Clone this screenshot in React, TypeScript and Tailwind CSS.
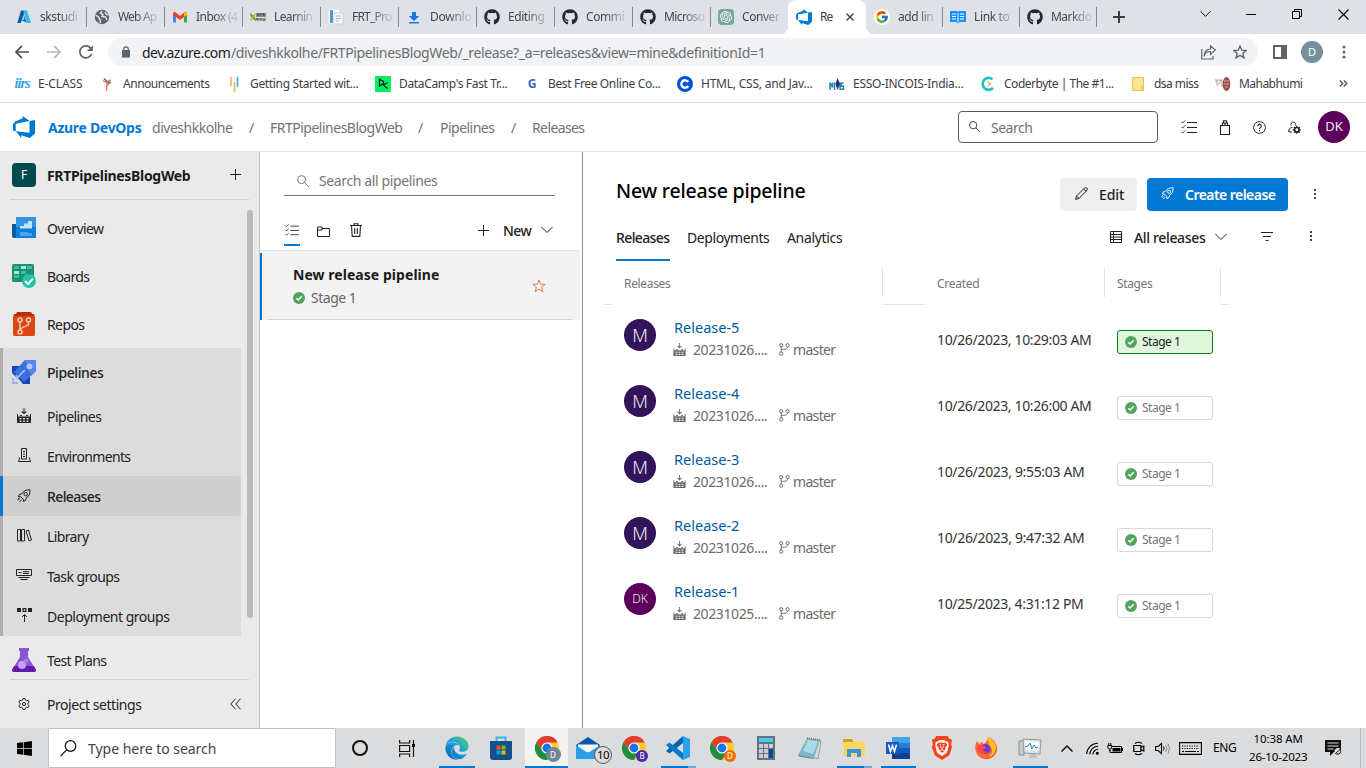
import React, { useLayoutEffect, useRef, useState } from "react";
import { FaGithub, FaWindows, FaEdge } from "react-icons/fa";
import { FcGoogle } from "react-icons/fc";
import { SiOpenai, SiBrave } from "react-icons/si";

type P = { className?: string; children?: React.ReactNode };

/* One line of text, tracked so that it fills the width given by its class. */
function T({ className = "", children }: P) {
  const outer = useRef<HTMLSpanElement>(null);
  const inner = useRef<HTMLSpanElement>(null);
  const [spacing, setSpacing] = useState(0);
  useLayoutEffect(() => {
    if (!outer.current || !inner.current) return;
    const count = (inner.current.textContent || " ").length;
    const natural = inner.current.getBoundingClientRect().width;
    setSpacing((outer.current.clientWidth - 0.6 - natural) / count);
  }, []);
  return (
    <span ref={outer} className={`block shrink-0 whitespace-nowrap ${className}`}>
      <span ref={inner} className="inline-block" style={{ letterSpacing: spacing }}>
        {children}
      </span>
    </span>
  );
}

function Svg({ className = "", box = "0 0 16 16", children }: P & { box?: string }) {
  return (
    <svg viewBox={box} className={`shrink-0 ${className}`} fill="none" stroke="currentColor" strokeWidth="1">
      {children}
    </svg>
  );
}

/* ---------- shared glyphs ---------- */
const DevOps = ({ className = "" }: P) => (
  <svg viewBox="0 0 24 24" className={`shrink-0 ${className}`} fill="#0078d4">
    <path d="M0 8.877L2.247 5.91l8.405-3.416V.022l7.37 5.393L2.966 8.338v8.225L0 15.707zm24-4.45v14.651l-5.753 4.9-9.303-3.057v3.056l-5.978-7.416 15.057 1.798V5.415z" />
  </svg>
);
const Plus = ({ className = "" }: P) => (
  <Svg className={className} box="0 0 11 11"><path d="M5.500 0V11M0 5.500H11" /></Svg>
);
const Chevron = ({ className = "" }: P) => (
  <Svg className={className} box="0 0 12 8"><path d="M.5 1L6 6.500 11.500 1" /></Svg>
);
const Search = ({ className = "" }: P) => (
  <Svg className={className} box="0 0 12 12"><circle cx="4.600" cy="4.600" r="4" /><path d="M7.500 7.500L11.700 11.700" /></Svg>
);
const Checklist = ({ className = "" }: P) => (
  <Svg className={className} box="0 0 16 14">
    <path d="M6 2.500H16M6 7.500H16M6 12.500H16" />
    <path d="M.3 1.800L1.600 3.100 4.200.4M.3 6.800L1.600 8.100 4.200 5.400M.3 11.800L1.600 13.100 4.200 10.400" strokeWidth=".9" />
  </Svg>
);
const Kebab = ({ className = "" }: P) => (
  <svg viewBox="0 0 4 12" className={`shrink-0 ${className}`} fill="#4c4640">
    <path d="M1 1h2v2H1zM1 5h2v2H1zM1 9h2v2H1z" />
  </svg>
);
const Rocket = ({ className = "" }: P) => (
  <Svg className={className} box="0 0 14 14">
    <path d="M13 .8C9 .6 6.500 2 4.600 5L2.500 5.300 1.500 7.600 3.700 7.700 6.200 10.200 6.400 12.400 8.600 11.400 9 9.200C12 7.300 13.300 4.800 13 .8Z" />
    <circle cx="8.700" cy="5.200" r="1.700" />
    <path d="M3.200 9.200L1 11.400M4.700 10.700L2.500 12.900M2.300 8.500L.6 10.200" />
  </Svg>
);
const Build = ({ className = "" }: P) => (
  <svg viewBox="0 0 14 15" className={`shrink-0 ${className}`} fill="currentColor">
    <path d="M6.500 0h1v4.300L9 3l.7.700L7 6.300 4.300 3.700 5 3l1.500 1.300zM0 6h1v2.500h12V6h1v9H0zM3 7h2v1H3zM9 7h2v1H9z" />
    <path d="M2.500 10h2v1.300h-2zM6 10h2v1.300H6zM9.500 10h2v1.300h-2zM2.500 12.500h2v1.300h-2zM6 12.500h2v1.300H6zM9.500 12.500h2v1.300h-2z" fill="#f4f4f4" />
  </svg>
);
const Ok = ({ className = "" }: P) => (
  <svg viewBox="0 0 12 12" className={`shrink-0 ${className}`} fill="none">
    <circle cx="6" cy="6" r="6" fill="#55a362" />
    <path d="M3.300 6.200L5.200 8 8.700 4.300" stroke="#fff" strokeWidth="1.500" />
  </svg>
);
const Branch = ({ className = "" }: P) => (
  <Svg className={className} box="0 0 11 13">
    <circle cx="2.200" cy="2.200" r="1.600" /><circle cx="8.600" cy="2.200" r="1.600" /><circle cx="2.200" cy="10.600" r="1.600" />
    <path d="M2.200 3.800V9M8.600 3.800C8.600 6.200 6 6.300 2.200 6.500" />
  </Svg>
);

/* ---------- browser ---------- */
const github = <FaGithub className="size-4 text-[#24292f]" />;
const tabs: { icon: React.ReactNode; label: string; w: string }[] = [
  {
    icon: (
      <svg viewBox="0 0 16 16" className="size-4">
        <path d="M5 1.500h4L4.800 14H1.300z" fill="#0a5ba5" /><path d="M7 1.500h4L15 14h-3.600z" fill="#35b5ee" /><path d="M7.500 5L11 14 4 10.500h4z" fill="#0078d4" />
      </svg>
    ),
    label: "skstudi",
    w: "w-[38px]",
  },
  {
    icon: (
      <svg viewBox="0 0 16 16" className="size-4">
        <circle cx="8" cy="8" r="7.200" fill="#5f6368" />
        <path d="M1.500 6L4.500 8 6 10.500 6.500 14M8 2L6.500 4 9 5.500 8 7.500 11.500 8 13 11M11 3l1 2 2.500 1" stroke="#dee1e6" strokeWidth="1.500" fill="none" />
      </svg>
    ),
    label: "Web Ap",
    w: "w-[39px]",
  },
  {
    icon: (
      <svg viewBox="0 0 16 16" className="size-4">
        <path d="M1 4v9.500h3V7z" fill="#4285f4" /><path d="M15 4v9.500h-3V7z" fill="#34a853" />
        <path d="M1 4.300L2.500 2.500 8 6.700 13.500 2.500 15 4.300V6L8 11 1 6z" fill="#ea4335" /><path d="M12 3.700l1.500-1.200L15 4.300V6l-3 2z" fill="#fbbc04" />
      </svg>
    ),
    label: "Inbox (4",
    w: "w-[42px]",
  },
  {
    icon: (
      <svg viewBox="0 0 16 16" className="size-4">
        <path d="M6 4h10v4H6z" fill="#8a8a84" /><path d="M5 9h11v3H5z" fill="#a5a49f" /><path d="M7 5h1v2m1-2h2v1m1-1h2v2M6 10h3m1 0h2m1 1h2" stroke="#444" fill="none" />
        <path d="M0 4l3 2 3-2-1 4 1 4-3-2-3 2 1-4z" fill="#d9b72c" /><path d="M0 4l3 3-2 1zM4 8l2 4-3-2z" fill="#1f9d66" />
      </svg>
    ),
    label: "Learnin",
    w: "w-[39px]",
  },
  {
    icon: (
      <svg viewBox="0 0 16 16" className="size-4">
        <path d="M0 0h12v16H0z" fill="#f6f8fa" stroke="#c3cad2" strokeWidth=".6" /><path d="M2 1h3v13H2z" fill="#4a9cd3" />
        <path d="M6 4h9v11H6z" fill="#f4f6f8" stroke="#b8c2cc" strokeWidth=".6" /><path d="M8 7h5M8 9.500h5M8 12h3" stroke="#aeb9c4" />
      </svg>
    ),
    label: "FRT_Pro",
    w: "w-[40px]",
  },
  {
    icon: (
      <svg viewBox="0 0 16 16" className="size-4" fill="#1a73e8">
        <path d="M6 3h4v4h3.300L8 12 2.700 7H6zM3 13h10v1.600H3z" />
      </svg>
    ),
    label: "Downlo",
    w: "w-[42px]",
  },
  { icon: github, label: "Editing", w: "w-[37px]" },
  { icon: github, label: "Commi", w: "w-[39px]" },
  { icon: github, label: "Microso", w: "w-[41px]" },
  { icon: <span className="flex size-4 items-center justify-center rounded-sm bg-[#74aa9c]"><SiOpenai className="size-3 text-white" /></span>, label: "Conver", w: "w-[38px]" },
];
const tabsAfter: { icon: React.ReactNode; label: string; w: string }[] = [
  { icon: <span className="flex size-4 items-center justify-center rounded-full bg-white"><FcGoogle className="size-3.5" /></span>, label: "add lin", w: "w-[36px]" },
  {
    icon: (
      <svg viewBox="0 0 16 14" className="h-3.5 w-4">
        <path d="M0 1h7l1 1 1-1h7v11H9.500L8 13.500 6.500 12H0z" fill="#1a8cff" /><path d="M2 4h4M2 6.500h4M2 9h4M10 4h4M10 6.500h4M10 9h4M8 3v9" stroke="#fff" />
      </svg>
    ),
    label: "Link to",
    w: "w-[36px]",
  },
  { icon: github, label: "Markdo", w: "w-[41px]" },
];

function Tab({ icon, label, w, width, line = true }: { icon: React.ReactNode; label: string; w: string; width: string; line?: boolean }) {
  return (
    <div className={`relative flex h-full items-center pl-2 ${width}`}>
      {icon}
      <span className="ml-2 [mask-image:linear-gradient(90deg,#000_18px,#0003_38px)]">
        <T className={`text-[12px] text-[#43474b] ${w}`}>{label}</T>
      </span>
      {line && <span className="absolute top-[7px] -right-px h-5 w-px bg-[#86898d]" />}
    </div>
  );
}

function TabStrip() {
  return (
    <div className="flex h-[34px] bg-[#dee1e6] pl-2">
      {tabs.map((t, i) => (
        <Tab key={i} icon={t.icon} label={t.label} w={t.w} width="w-[78px]" line={i < 9} />
      ))}
      <div className="relative flex h-full w-[78px] items-center rounded-t-lg bg-white pl-2">
        <span className="absolute bottom-0 -left-2 size-2 bg-[radial-gradient(circle_at_0_0,transparent_8px,#fff_8.500px)]" />
        <span className="absolute -right-2 bottom-0 size-2 bg-[radial-gradient(circle_at_100%_0,transparent_8px,#fff_8.500px)]" />
        <DevOps className="size-4" />
        <T className="ml-2 w-[13px] text-[12px] text-[#3c4043]">Re</T>
        <svg viewBox="0 0 8 8" className="mr-3 ml-auto size-2" stroke="#3c4043" strokeWidth="1.400"><path d="M.5.5l7 7M7.500.5l-7 7" /></svg>
      </div>
      {tabsAfter.map((t, i) => (
        <Tab key={i} icon={t.icon} label={t.label} w={t.w} width={i === 0 ? "w-[76px]" : "w-[77px]"} />
      ))}
      <svg viewBox="0 0 12 12" className="mt-[11px] ml-[17px] size-3" stroke="#3c4043" strokeWidth="2"><path d="M6 0v12M0 6h12" /></svg>
      <Chevron className="mt-2.5 ml-auto h-2 w-[11px] text-black" />
      <span className="mt-3.5 ml-[35px] h-px w-2.5 bg-black" />
      <svg viewBox="0 0 10 10" className="mt-[9px] ml-9 size-2.5" fill="none" stroke="#000"><path d="M.5 2.500h7v7h-7zM2.500 2.500v-2h7v7h-2" /></svg>
      <svg viewBox="0 0 11 11" className="mt-[9px] mr-[17px] ml-[36px] size-[11px]" stroke="#000" strokeWidth="1.100"><path d="M.5.5l10 10M10.500.5l-10 10" /></svg>
    </div>
  );
}

function Toolbar() {
  return (
    <div className="flex h-9 items-center bg-white pl-[15px] text-[#5f6368]">
      <Svg className="size-3.5 text-[#4d5156]" box="0 0 14 14"><path d="M14 7H1M7 .8L.9 7 7 13.200" strokeWidth="1.700" /></Svg>
      <Svg className="ml-[18px] size-3.5 text-[#b4b7ba]" box="0 0 14 14"><path d="M0 7H13M7 .8L13.100 7 7 13.200" strokeWidth="1.700" /></Svg>
      <Svg className="ml-[18px] size-3.5" box="0 0 14 14"><path d="M12.500 9A6 6 0 1 1 11.500 3L13 4.700" strokeWidth="1.700" /><path d="M13.900.2V6H8z" fill="currentColor" stroke="none" /></Svg>
      <div className="ml-[15px] flex h-7 w-[1150px] items-center rounded-full bg-[#f1f3f4] pl-[14px]">
        <svg viewBox="0 0 8 12" className="h-3 w-2" fill="none"><path d="M0 4h8v7.500H0z" fill="#5f6368" /><path d="M1.800 4.500V3a2.200 2.200 0 0 1 4.400 0v1.500" stroke="#5f6368" strokeWidth="1.200" /></svg>
        <T className="ml-3 w-[89px] text-[14px] text-[#202124]">dev.azure.com</T>
        <T className="w-[535px] text-[14px] text-[#6a6e73]">/diveshkkolhe/FRTPipelinesBlogWeb/_release?_a=releases&view=mine&definitionId=1</T>
        <Svg className="ml-auto size-[15px]" box="0 0 15 15"><path d="M.7 4V14H12V11M3 11.500C3.500 8 6 6.500 9.500 6.500V9.500L14.500 5 9.500 1V4C5.500 4 3 7.500 3 11.500Z" strokeWidth="1.200" /></Svg>
        <Svg className="mr-[11px] ml-[17px] size-3.5" box="0 0 14 14"><path d="M7 1L8.700 5.200 13.200 5.500 9.800 8.400 10.900 12.800 7 10.400 3.100 12.800 4.200 8.400.8 5.500 5.300 5.200Z" strokeWidth="1.400" /></Svg>
      </div>
      <svg viewBox="0 0 14 14" className="ml-[15px] size-3.5" fill="none"><path d="M1 1h12v12H1z" stroke="#5f6368" strokeWidth="2" /><path d="M8 1h5v12H8z" fill="#5f6368" /></svg>
      <span className="ml-3.5 flex size-[22px] items-center justify-center rounded-full bg-[#78909c] text-[11px] text-white">D</span>
      <svg viewBox="0 0 4 14" className="ml-[19px] h-3.5 w-1" fill="#5f6368"><circle cx="2" cy="2" r="1.500" /><circle cx="2" cy="7" r="1.500" /><circle cx="2" cy="12" r="1.500" /></svg>
    </div>
  );
}

function Bookmark({ icon, label, width }: { icon: React.ReactNode; label: string; width: string }) {
  return (
    <div className="flex items-center gap-2">
      <span className="flex size-4 items-center justify-center">{icon}</span>
      <T className={`text-[12px] text-[#3c4043] ${width}`}>{label}</T>
    </div>
  );
}

function Bookmarks() {
  return (
    <div className="flex h-[33px] items-center gap-4 border-b border-[#d5d7da] bg-white pb-[5px] pl-3.5">
      <Bookmark width="w-[45px]" label="E-CLASS" icon={<span className="font-['Liberation_Serif',serif] text-[14px] leading-none font-bold tracking-[-0.9px] text-[#2ba5df] italic">iirs</span>} />
      <Bookmark width="w-[87px]" label="Announcements" icon={<svg viewBox="0 0 16 16" className="size-4" fill="none" strokeWidth="1.500"><path d="M4 5l4 1-.5 9M8 6l4-2M8 6l2 3" stroke="#ee7a4b" /><path d="M5 2.500l3 3M12 7L8.500 6" stroke="#3d6fa5" /></svg>} />
      <Bookmark width="w-[109px]" label="Getting Started wit..." icon={<svg viewBox="0 0 16 16" className="size-4" strokeWidth="1.700"><path d="M5 1v9M8.500 6v10" stroke="#f0b567" /><path d="M11.500 1v10" stroke="#3fb4d8" /></svg>} />
      <Bookmark width="w-[109px]" label="DataCamp's Fast Tr..." icon={<svg viewBox="0 0 16 16" className="size-4" fill="none"><path d="M0 0h16v16H0z" fill="#03ef62" /><path d="M4.500 11V3l4 2.500v2L4.500 10M12.500 6.500L8.500 9l4 3.500" stroke="#05192d" strokeWidth="1.200" /></svg>} />
      <Bookmark width="w-[113px]" label="Best Free Online Co..." icon={<span className="text-[12px] font-bold text-[#356ac4]">G</span>} />
      <Bookmark width="w-[112px]" label="HTML, CSS, and Jav..." icon={<svg viewBox="0 0 16 16" className="size-4" fill="none"><circle cx="8" cy="8" r="8" fill="#0056d2" /><path d="M11.200 10A3.700 3.700 0 1 1 11.200 6" stroke="#fff" strokeWidth="2.400" /></svg>} />
      <Bookmark width="w-[111px]" label="ESSO-INCOIS-India..." icon={<svg viewBox="0 0 16 16" className="size-4" fill="none"><path d="M1 14V6.500l2.500 5V6.500M5.500 6.500V14M11 6.500V14M14.500 7.200h-2.300v3h2.300v3.100h-3" stroke="#2485ad" strokeWidth="1.500" /><path d="M8.500 2L11 8 8.500 14 6.500 8z" fill="#2b2c78" /></svg>} />
      <Bookmark width="w-[110px]" label="Coderbyte | The #1..." icon={<svg viewBox="0 0 16 16" className="size-4" fill="none"><path d="M12.500 3.200A6 6 0 1 0 13 12" stroke="#1cc0c4" strokeWidth="2.600" /><path d="M7.500 5.500L10.500 8l-3 2.500" stroke="#f1a44b" strokeWidth="1.200" /></svg>} />
      <Bookmark width="w-[45px]" label="dsa miss" icon={<svg viewBox="0 0 16 16" className="size-4"><path d="M2.500 1.500h11v13h-11z" fill="#ffe591" stroke="#e8c34a" /><path d="M11.500 10.500h2v4h-2z" fill="#ffd75e" stroke="#e8c34a" strokeWidth=".7" /></svg>} />
      <Bookmark width="w-[64px]" label="Mahabhumi" icon={<svg viewBox="0 0 16 16" className="size-4" fill="none"><path d="M0 4h7M2 4v6M5 4v3l-2 1M7 4v7M.5 6h1" stroke="#9a8a88" strokeWidth=".8" /><ellipse cx="11.500" cy="8" rx="3.800" ry="7" fill="#9c4a44" /><path d="M9 5h5M9 8h5M10 11h3" stroke="#e6c9bd" strokeWidth=".8" /></svg>} />
      <svg viewBox="0 0 9 7" className="ml-[20px] h-[7px] w-[9px]" fill="none" stroke="#4d5156" strokeWidth="1.300"><path d="M.8.5l3 3-3 3M4.800.5l3 3-3 3" /></svg>
    </div>
  );
}

/* ---------- Azure DevOps ---------- */
function Header() {
  return (
    <div className="flex h-[49px] items-center border-b border-[#e3e3e3] bg-white pl-[13px] text-[14px] text-[#737373]">
      <DevOps className="size-[22px]" />
      <T className="ml-[13px] w-[94px] font-bold text-[#0078d4]">Azure DevOps</T>
      <T className="ml-2.5 w-[81px]">diveshkkolhe</T>
      <span className="ml-4 w-[6px]">/</span>
      <T className="ml-[15px] w-[133px]">FRTPipelinesBlogWeb</T>
      <span className="ml-[15px] w-[6px]">/</span>
      <T className="ml-4 w-[55px]">Pipelines</T>
      <span className="ml-4 w-[6px]">/</span>
      <T className="ml-[15px] w-[53px]">Releases</T>
      <div className="mb-px ml-auto flex h-8 w-[200px] items-center rounded-sm border border-[#5a5a5a] pl-[10px]">
        <Search className="mb-px size-[11px] text-[#333]" />
        <T className="mt-px ml-[11px] w-[42px]">Search</T>
      </div>
      <Checklist className="ml-[23px] h-3.5 w-4 text-[#222]" />
      <Svg className="ml-[22px] h-[15px] w-[12px] text-[#222]" box="0 0 12 15"><path d="M1.500 5.500h9v9h-9zM3.500 5.500V3h5v2.500M4.500 3V.8h3V3M6 3v2" strokeWidth="1.100" /></Svg>
      <Svg className="ml-[22px] size-[13px] text-[#222]" box="0 0 13 13"><circle cx="6.500" cy="6.500" r="5.900" /><path d="M4.700 5.200a1.800 1.800 0 1 1 2.500 1.600q-.7.300-.7 1.300M6.500 9v1.300" strokeWidth="1.100" /></Svg>
      <Svg className="ml-[22px] size-[13px] text-[#222]" box="0 0 13 13"><path d="M3.200 4.500A2.400 2.400 0 1 1 7.500 4.500M.7 10.500C.7 8 2 6.500 4.500 6.500M1 9.500V11H4" /><circle cx="8.800" cy="8.800" r="2.300" strokeWidth="1.700" /><path d="M8.800 4.800v8M4.800 8.800h8M6 6l5.600 5.600M11.600 6L6 11.600" strokeDasharray="1.400 5.200" strokeWidth="1.300" /></Svg>
      <span className="mr-4 ml-[17px] flex size-8 items-center justify-center rounded-full bg-[#5c005c] text-[13px] text-[#f1e6f1]">DK</span>
    </div>
  );
}

function NavItem({ icon, label, width, strong }: { icon: React.ReactNode; label: string; width: string; strong?: boolean }) {
  return (
    <div className="flex h-12 items-center pl-3">
      {icon}
      <T className={`ml-[11px] text-[14px] text-[#222] ${strong ? "font-medium" : ""} ${width}`}>{label}</T>
    </div>
  );
}

function SubItem({ icon, label, width, active }: { icon: React.ReactNode; label: string; width: string; active?: boolean }) {
  return (
    <div className={`relative flex h-10 items-center pl-3 ${active ? "rounded-sm bg-[#cfcfcf]" : ""}`}>
      {active && <span className="absolute top-0 left-0 h-10 w-[3px] bg-[#0078d4]" />}
      <span className="flex w-6 items-center justify-center text-[#222]">{icon}</span>
      <T className={`ml-[11px] text-[14px] text-[#222] ${active ? "font-medium" : ""} ${width}`}>{label}</T>
    </div>
  );
}

function Sidebar() {
  return (
    <div className="flex w-[260px] shrink-0 flex-col border-r border-[#c8c8c8] bg-[#eaeaea]">
      <div className="mx-2.5 flex h-12 items-center border-b border-[#cfcfcf] pl-0.5">
        <span className="mb-px flex size-6 items-center justify-center rounded-sm bg-[#004b50] text-[12px] text-white">F</span>
        <T className="ml-[11px] w-[144px] text-[14px] font-bold text-[#1b1b1b]">FRTPipelinesBlogWeb</T>
        <Plus className="mr-2 mb-0.5 ml-auto size-[11px] text-[#222]" />
      </div>
      <div className="relative h-[479px] overflow-hidden pt-1 pr-[18px]">
        <NavItem width="w-[57px]" label="Overview" icon={
          <svg viewBox="0 0 24 24" className="size-6"><path d="M0 8h5v14H2a2 2 0 0 1-2-2z" fill="#005ba1" /><path d="M4 1h20v21H2a2 2 0 0 0 2-2z" fill="#0d80da" /><path d="M4 1h20v10H4z" fill="#3494e3" /><path d="M8 10h4V7.500h4V5h4v7.500H8z" fill="#c2e4ff" /><path d="M8 16h8v1h4v3H8z" fill="#47a7ee" /></svg>} />
        <NavItem width="w-[43px]" label="Boards" icon={
          <svg viewBox="0 0 24 24" className="size-6"><path d="M0 1.500Q0 0 1.500 0h19Q22 0 22 1.500V18H1.500Q0 18 0 16.500z" fill="#1f8e74" /><path d="M2 2h5v3H2zM15 2h5v3h-5zM9 7h5v3H9zM2 11h5v3H2z" fill="#33c49e" /><path d="M9 2h5v3H9zM2 7h5v3H2z" fill="#9ff0dc" /><circle cx="17" cy="17" r="7" fill="#20c4a4" /><path d="M13 17l3 3 5-5.500" stroke="#fff" strokeWidth="2" fill="none" /></svg>} />
        <NavItem width="w-[38px]" label="Repos" icon={
          <svg viewBox="0 0 24 24" className="size-6" fill="none"><path d="M5 0h14l1 2h2l1 4H1l1-4h2z" fill="#b52f04" /><path d="M1 4h22v18.500Q23 24 21.500 24h-19Q1 24 1 22.500z" fill="#dd4511" /><g stroke="#fbd3c5" strokeWidth="1.400"><circle cx="8" cy="8" r="2" /><circle cx="16.500" cy="8" r="2" /><circle cx="8" cy="20" r="2" /><path d="M8 10v8M16.500 10v2.500L8 17" /></g></svg>} />
        <div className="relative bg-[#dcdcdc]">
          <span className="absolute inset-y-0 left-0 w-[3px] bg-[#afafaf]" />
          <NavItem strong width="w-[57px]" label="Pipelines" icon={
            <svg viewBox="0 0 24 24" className="size-6"><path d="M0 6h10l-3 12H5l-5-5zM7 18l11-5v11h-7l-5-6z" fill="#1647b5" /><path d="M13 0h11v11L12 22 2 12z" fill="#3a6fe2" /><path d="M13 0h11v11l-5 5z" fill="#5484ee" /><circle cx="17.500" cy="6.500" r="3" fill="#a9c8fb" /><path d="M0 18h2v4h4v2H0z" fill="#93b2f2" /><path d="M4 19l9-9M4 15l2 5" stroke="#a9c4fa" strokeWidth="1.500" /></svg>} />
          <SubItem width="w-[55px]" label="Pipelines" icon={<Build className="mb-0.5 h-[15px] w-3.5" />} />
          <SubItem width="w-[84px]" label="Environments" icon={<Svg className="mb-px h-[15px] w-[13px]" box="0 0 13 15"><path d="M3.500 11V.5h5V11M1.700 9.500L.6 13.500H12.400L11.300 9.500M3.500 11h5M5 3.500h2M5 6h2M5 8.500h2" /></Svg>} />
          <SubItem active width="w-[54px]" label="Releases" icon={<Rocket className="mb-px size-3.5" />} />
          <SubItem width="w-[42px]" label="Library" icon={<Svg className="mb-px h-[13px] w-[15px]" box="0 0 15 13"><path d="M.5.5h3v11.500h-3zM4.500.5h3v11.500h-3zM9 2l2.500-.8L14.500 11l-2.400.9z" /></Svg>} />
          <SubItem width="w-[73px]" label="Task groups" icon={<Svg className="mb-[2px] h-3 w-4" box="0 0 16 12"><path d="M.5.5h15v6H.5zM2.500 3.500h3M7 2.700h6M7 4.500h6M2.500 8.500h11M4.500 10.500h7" /></Svg>} />
          <SubItem width="w-[123px]" label="Deployment groups" icon={<svg viewBox="0 0 15 14" className="mb-[2px] h-3.5 w-[15px]" fill="#222"><path d="M0 0h4v4H0zM11 0h4v4h-4zM5.500 0h4v4h-4zM7 7h1v7H7z" /><path d="M6.700 1.200h1.600v1.600H6.700z" fill="#ddd" /><path d="M5 9l2.500-2.500L10 9" stroke="#222" fill="none" /></svg>} />
        </div>
        <NavItem width="w-[60px]" label="Test Plans" icon={
          <svg viewBox="0 0 24 24" className="size-6"><path d="M7 0h10v3h-1v6l8 13Q24 24 22 24H2Q0 24 0 22L8 9V3H7z" fill="#8b57cf" /><path d="M2 18h20l2 4q0 2-2 2H2q-2 0-2-2z" fill="#5f1bab" /><circle cx="10" cy="17" r="4" fill="#c8a2f2" /><circle cx="14" cy="13" r="2.300" fill="#aa7be0" /></svg>} />
        <span className="absolute top-2.5 right-1.5 h-[408px] w-1.5 rounded-full bg-[#bababa]" />
      </div>
      <div className="mx-2.5 flex h-[49px] items-center border-t border-[#cfcfcf] pl-0.5">
        <Svg className="mb-px ml-[6px] size-3 text-[#222]" box="0 0 12 12"><path d="M5 .6h2l.4 1.500 1.200.7 1.500-.5 1 1.800-1.200 1.100v1.500l1.200 1.200-1 1.700-1.500-.4-1.200.7L7 11.500H5l-.4-1.600-1.200-.7-1.500.4-1-1.700 1.200-1.200V5.200L.9 4.100l1-1.800 1.500.5 1.200-.7z" /><circle cx="6" cy="6" r="1.600" /></Svg>
        <T className="ml-[17px] w-[95px] text-[14px] text-[#222]">Project settings</T>
        <Svg className="mr-2 mb-px ml-auto h-3 w-[11px] text-[#222]" box="0 0 11 12"><path d="M5.500.8L.8 6l4.700 5.200M10.500.8L5.800 6l4.700 5.200" /></Svg>
      </div>
    </div>
  );
}

function PipelineList() {
  return (
    <div className="w-[323px] shrink-0 border-r border-[#8e8e8e] bg-white">
      <div className="mx-6 flex h-11 w-[271px] items-center border-b border-[#767676] pt-3.5 pl-[13px] text-[#767676]">
        <Search className="size-3" />
        <T className="ml-2.5 w-[119px] text-[14px]">Search all pipelines</T>
      </div>
      <div className="flex h-[54px] items-center pt-3.5 pl-6 text-[#222]">
        <span className="relative flex h-8 w-4 items-center justify-center">
          <Checklist className="h-3 w-3.5" />
          <span className="absolute bottom-0 left-0 h-0.5 w-4 bg-[#0078d4]" />
        </span>
        <Svg className="mt-0.5 ml-[17px] h-[11px] w-[13px]" box="0 0 13 11"><path d="M.5 2q0-1 1-1h3l1.500 1.500h5.500q1 0 1 1v6q0 1-1 1h-10q-1 0-1-1zM.5 4h4L6 2.500" strokeWidth="1.100" /></Svg>
        <Svg className="ml-5 h-3.5 w-3" box="0 0 12 14"><path d="M0 2.500h12M4 2.500V.7h4v1.800M1.500 2.500l.7 10.900h7.600l.7-10.900M4.700 5v6M7.300 5v6" strokeWidth="1.100" /></Svg>
        <Plus className="ml-[116px] size-[11px]" />
        <T className="ml-[14px] w-[29px] text-[14px] font-medium">New</T>
        <Chevron className="ml-[9px] h-2 w-3" />
      </div>
      <div className="relative flex h-[70px] w-80 items-center border-t border-[#e4e4e4] bg-[#f3f3f3] pl-[33px]">
        <span className="absolute top-0.5 left-0 h-[67px] w-0.5 bg-[#0078d4]" />
        <span className="absolute bottom-0 left-2 h-px w-[304px] bg-[#d6d6d6]" />
        <div className="w-[239px]">
          <T className="relative top-px w-[147px] text-[14px] leading-6 font-bold text-[#1b1b1b]">New release pipeline</T>
          <div className="flex h-6 items-center"><Ok className="size-3" /><T className="ml-1.5 w-[46px] text-[14px] text-[#666]">Stage 1</T></div>
        </div>
        <Svg className="size-3.5 text-[#d67f4c]" box="0 0 14 14"><path d="M7 1L8.600 5.200 13.200 5.300 9.600 8.200 10.800 12.700 7 10.200 3.200 12.700 4.400 8.200.8 5.300 5.400 5.200Z" /></Svg>
      </div>
    </div>
  );
}

const releases = [
  { n: 5, who: "M", build: "20231026....", date: "10/26/2023, 10:29:03 AM", w: "w-[155px]", on: true },
  { n: 4, who: "M", build: "20231026....", date: "10/26/2023, 10:26:00 AM", w: "w-[155px]" },
  { n: 3, who: "M", build: "20231026....", date: "10/26/2023, 9:55:03 AM", w: "w-[148px]" },
  { n: 2, who: "M", build: "20231026....", date: "10/26/2023, 9:47:32 AM", w: "w-[148px]" },
  { n: 1, who: "DK", build: "20231025....", date: "10/25/2023, 4:31:12 PM", w: "w-[147px]" },
];

function Releases() {
  return (
    <div className="flex-1 bg-white text-[#222]">
      <div className="flex h-[68px] items-center pt-[17px] pl-[33px]">
        <T className="mb-2 w-[190px] text-[19.500px] font-medium text-black">New release pipeline</T>
        <div className="ml-auto flex h-[33px] w-[77px] items-center rounded-sm bg-[#efefef] pl-[15px]">
          <Svg className="mb-0.5 size-[13px]" box="0 0 13 13"><path d="M.6 12.400L1.500 9 9.500 1q1.200-1 2.300 0t.1 2.400L3.900 11.500zM8.500 2L11 4.500M1.500 9L4 11.500" /></Svg>
          <T className="ml-[11px] w-[26px] text-[14px] font-medium">Edit</T>
        </div>
        <div className="ml-2.5 flex h-[33px] w-[141px] items-center rounded-sm bg-[#0078d4] pl-[14px] text-white">
          <Rocket className="mb-0.5 size-[13px]" />
          <T className="ml-[11px] w-[91px] text-[14px] font-semibold">Create release</T>
        </div>
        <Kebab className="mr-[49px] mb-0.5 ml-[25px] h-3 w-1" />
      </div>
      <div className="flex h-[41px] items-center pl-[33px] text-[14px]">
        <span className="relative flex h-full items-center">
          <T className="mb-[7px] w-[54px] font-medium">Releases</T>
          <span className="absolute bottom-0 left-0 h-0.5 w-[54px] bg-[#0078d4]" />
        </span>
        <T className="mb-[7px] ml-[17px] w-[83px]">Deployments</T>
        <T className="mb-[7px] ml-[17px] w-[56px]">Analytics</T>
        <Svg className="mb-[7px] ml-auto size-3" box="0 0 12 12"><path d="M.5.5h11v11H.5zM3.500.5v11M.5 3.500h11M.5 6h11M.5 8.500h11" /></Svg>
        <T className="mb-[7px] ml-3 w-[72px] font-medium">All releases</T>
        <Chevron className="mb-[8px] ml-[9px] h-2 w-3" />
        <Svg className="mb-[8px] ml-[34px] h-[9px] w-3" box="0 0 12 9"><path d="M0 .5h12M2 4.500h8M4.500 8.500h3" /></Svg>
        <Kebab className="mr-[53px] mb-[9px] ml-9 h-3 w-1" />
      </div>
      <div className="relative mt-[7px] flex h-[37px] pl-[41px] text-[12px] text-[#767676]">
        <div className="h-[29px] w-[259px] border-r border-[#e3e3e3] leading-[32px]"><T className="w-[47px]">Releases</T></div>
        <div className="h-[29px] w-[222px] border-r border-[#e3e3e3] pl-[54px] leading-[32px]"><T className="w-[43px]">Created</T></div>
        <div className="h-[29px] w-[116px] border-r border-[#e3e3e3] pl-3 leading-[32px]"><T className="w-[36px]">Stages</T></div>
        <span className="absolute bottom-0 left-[21px] h-px w-2 bg-[#e3e3e3]" />
        <span className="absolute bottom-0 left-[300px] h-px w-[42px] bg-[#e3e3e3]" />
        <span className="absolute bottom-0 left-[638px] h-px w-2 bg-[#e3e3e3]" />
      </div>
      {releases.map((r) => (
        <div key={r.n} className="flex h-[66px] pl-[41px] text-[14px]">
          <span className={`mt-3.5 flex size-8 shrink-0 items-center justify-center rounded-full text-[#efeaf3] ${r.who === "M" ? "bg-[#32145a] text-[18px] font-light" : "bg-[#5c005c] text-[12px] font-light"}`}>{r.who}</span>
          <div className="ml-[17px] w-[264px] pt-2.5">
            <T className="ml-px w-[66px] text-[14.500px] leading-6 text-[#005a9e]">{`Release-${r.n}`}</T>
            <div className="-mt-0.5 flex h-6 items-center text-[#6b6b6b]">
              <Build className="mt-px h-[13px] w-[13px]" />
              <T className="ml-[7px] w-[75px]">{r.build}</T>
              <Branch className="mt-px ml-[11px] h-[13px] w-[11px]" />
              <T className="ml-[3px] w-[43px]">master</T>
            </div>
          </div>
          <div className="w-[180px] pt-[23px] leading-6 text-[#333]"><T className={r.w}>{r.date}</T></div>
          <div className={`mt-[25px] flex h-6 w-24 items-center rounded-[3px] border pl-[7px] text-[12px] ${r.on ? "border-[#107c10] bg-[#dff6dd] text-[#222]" : "border-[#d6d6d6] bg-white text-[#767676]"}`}>
            <Ok className="size-3" />
            <T className="ml-[5px] w-[39px]">Stage 1</T>
          </div>
        </div>
      ))}
    </div>
  );
}

/* ---------- taskbar ---------- */
function Chrome({ badge, color }: { badge: string; color: string }) {
  return (
    <span className="relative block size-6">
      <svg viewBox="0 0 24 24" className="size-6">
        <circle cx="12" cy="12" r="12" fill="#fcc934" />
        <path d="M12 6.500H22.700A12 12 0 0 0 1.600 6L7.200 14.750Z" fill="#e33b2e" />
        <path d="M1.600 6A12 12 0 0 0 12 24L16.760 14.750 7.200 14.750Z" fill="#1e8e3e" />
        <circle cx="12" cy="12" r="5.600" fill="#fff" /><circle cx="12" cy="12" r="4.400" fill="#1a73e8" />
      </svg>
      <span className={`absolute -right-0.5 -bottom-0.5 flex items-center justify-center rounded-full text-[8px] text-white ${color}`}>{badge}</span>
    </span>
  );
}

function Slot({ children, bar, className = "w-11" }: P & { bar?: React.ReactNode }) {
  return (
    <div className={`relative flex items-center justify-center ${className}`}>
      {children}
      {bar}
    </div>
  );
}
const Bar = ({ className = "w-9 left-1" }: P) => <span className={`absolute bottom-0 h-0.5 bg-[#0078d7] ${className}`} />;

function Taskbar() {
  return (
    <div className="flex h-10 bg-[#dbdcde] text-black">
      <div className="flex w-12 items-center justify-center"><FaWindows className="size-[17px]" /></div>
      <div className="flex w-[288px] items-center border border-[#c2c2c2] bg-white pl-[11px]">
        <svg viewBox="0 0 17 17" className="size-[17px]" fill="none" stroke="#111" strokeWidth="1.200"><circle cx="10.500" cy="6" r="5.300" /><path d="M6.600 9.800L.6 16" /></svg>
        <T className="ml-[11px] w-[129px] text-[14px] text-[#444]">Type here to search</T>
      </div>
      <div className="flex w-12 items-center justify-center"><span className="size-4 rounded-full border-2 border-[#111]" /></div>
      <div className="flex w-[51px] items-center justify-center pr-1">
        <svg viewBox="0 0 17 17" className="size-[17px]" fill="none" stroke="#111" strokeWidth="1.200"><path d="M.6 0v3h10V0M.6 17v-3h10v3M.6 5.500h10v6H.6zM14.500 0v17" /><path d="M13 4h3v3h-3z" fill="#111" stroke="none" /></svg>
      </div>
      <Slot bar={<Bar />}>
        <svg width="0" height="0" className="absolute"><defs><linearGradient id="edge" x1="0" y1="1" x2="1" y2="0"><stop offset="0" stopColor="#0c59a4" /><stop offset=".5" stopColor="#1b9de2" /><stop offset="1" stopColor="#54d65c" /></linearGradient></defs></svg>
        <FaEdge className="size-6" fill="url(#edge)" />
      </Slot>
      <Slot>
        <svg viewBox="0 0 24 24" className="size-6" fill="none"><path d="M7.500 6V1.500h9V6" stroke="#32b8f0" strokeWidth="2" /><path d="M1 5h22v16q0 3-3 3H4q-3 0-3-3z" fill="#164f8c" /><path d="M7.500 9.500h4v4h-4z" fill="#f25022" /><path d="M12.500 9.500h4v4h-4z" fill="#7fba00" /><path d="M7.500 14.500h4v4h-4z" fill="#00a4ef" /><path d="M12.500 14.500h4v4h-4z" fill="#ffb900" /></svg>
      </Slot>
      <Slot className="ml-0.5 w-[43px] bg-[#f4f3f2]" bar={<Bar className="left-0 w-[43px]" />}><Chrome badge="D" color="size-[15px] bg-[#6f8794]" /></Slot>
      <Slot>
        <svg viewBox="0 0 26 24" className="mr-1 h-6 w-[26px]"><path d="M1 9L13 1l12 8v14H1z" fill="#0a5aa8" /><path d="M3 8.500h20v8H3z" fill="#f5f8fb" /><path d="M1 9l12 8 12-8v14H1z" fill="#2ba0e8" /></svg>
        <span className="absolute right-0 bottom-1 flex size-[18px] items-center justify-center rounded-full border border-[#555] bg-[#dcdcdc] text-[11.500px] tracking-tighter">10</span>
      </Slot>
      <Slot><Chrome badge="B" color="size-3 bg-[#4d27a6]" /></Slot>
      <Slot bar={<><Bar className="left-[5px] w-[27px]" /><span className="absolute bottom-0 left-[32px] h-0.5 w-2 bg-[#63aae6]" /></>}>
        <svg viewBox="0 0 24 24" className="size-6"><path d="M17 0l7 3v18l-7 3z" fill="#2aa3ee" /><path d="M17 0v7L3.500 17.500 0 15z" fill="#0065a9" /><path d="M17 24v-7L3.500 6.500 0 9z" fill="#007acc" /></svg>
      </Slot>
      <Slot><Chrome badge="D" color="size-3 bg-[#ef6c00]" /></Slot>
      <Slot>
        <svg viewBox="0 0 20 24" className="h-6 w-5"><path d="M1 0h18v24H1z" fill="#66727d" /><path d="M3 2h14v4H3z" fill="#49cdf3" /><path d="M3 8h4v4H3zM8 8h4v4H8zM13 8h4v4h-4zM3 13h4v4H3zM8 13h4v4H8zM3 18h4v4H3zM8 18h4v4H8z" fill="#c9ced2" /><path d="M13 13h4v9h-4z" fill="#0b4a8c" /></svg>
      </Slot>
      <Slot>
        <svg viewBox="0 0 24 24" className="size-6"><path d="M9 3l14 2-3 18-5-2z" fill="#d9dad4" stroke="#8b8f8d" strokeWidth=".8" /><path d="M9 2.500L22 4l-6 18L0 19z" fill="#79b8c6" /><path d="M10 4l10 1.500L15 18 5 15z" fill="#a8dbe6" /><path d="M0 19l16 3v1L1 20.500z" fill="#5a7f88" /><path d="M9 2l14 2" stroke="#777" strokeWidth="1.800" strokeDasharray="1 1" /></svg>
      </Slot>
      <Slot bar={<><Bar className="left-[5px] w-[27px]" /><span className="absolute bottom-0 left-[32px] h-0.5 w-2 bg-[#63aae6]" /></>}>
        <svg viewBox="0 0 22 20" className="h-5 w-[22px]"><path d="M0 1h9l2 3H0z" fill="#d9a008" /><path d="M0 4h10l1-1h11v15H0z" fill="#ffd567" /><path d="M4 11h14v8h-4v-4H8v4H4z" fill="#3c93d7" /></svg>
      </Slot>
      <Slot bar={<Bar className="left-[5px] w-[35px]" />}>
        <svg viewBox="0 0 24 22" className="h-[22px] w-6"><path d="M6 0h18v6H6z" fill="#41a5ee" /><path d="M6 6h18v5H6z" fill="#2b7cd3" /><path d="M6 11h18v5H6z" fill="#185abd" /><path d="M6 16h18v6H6z" fill="#103f91" /><path d="M0 5h13v12H0z" fill="#185abd" /><path d="M2.500 7.500l2 7 2-6 2 6 2-7" stroke="#fff" strokeWidth="1.500" fill="none" /></svg>
      </Slot>
      <Slot>
        <svg viewBox="0 0 24 26" className="absolute h-6 w-[22px]"><path d="M6 0h12l2 3 3 1-1 5 1 3-3 9-8 5-8-5-3-9 1-3-1-5 3-1z" fill="#f4431d" /></svg>
        <SiBrave className="relative size-4 text-white" />
      </Slot>
      <Slot>
        <svg viewBox="0 0 24 24" className="size-6"><path d="M14 1q6 2 8 7 3 6-1 11-4 5-10 4-7-1-9-7-2-6 1-11l2 3q2-2 4-2l0 2q4-1 5-7z" fill="#ff6a2c" /><path d="M14 1q7 4 8 10-1 8-7 10 5-6 2-10-3-3-3-10z" fill="#ffc329" /><circle cx="11.500" cy="13" r="5" fill="#7038c8" /><path d="M4 9q3 0 6 1l3 2-4 1q0 3 4 3-4 4-8 0-3-3-1-7z" fill="#ff4451" /></svg>
      </Slot>
      <Slot bar={<Bar className="left-[5px] w-[35px]" />}>
        <svg viewBox="0 0 24 22" className="h-[22px] w-6"><path d="M1 4h5v14H1z" fill="#c9ccc9" stroke="#8a8e8b" /><path d="M5 2l18 1-1 14-16-1z" fill="#e0e2df" stroke="#999" /><path d="M7 4l14 1-1 9-12-1z" fill="#fafefe" /><path d="M7 10l3-1 2-3 2 6 2-4 2 3 2-1" stroke="#2f84b6" fill="none" /><path d="M12 17l5 0 3 4h-9z" fill="#bcc0bd" /></svg>
      </Slot>
      <div className="ml-[9px] flex items-center">
        <Svg className="h-[7px] w-3" box="0 0 12 7"><path d="M.5 6.500L6 1l5.500 5.500" strokeWidth="1.400" /></Svg>
        <Svg className="ml-[13px] size-[13px]" box="0 0 13 13"><path d="M.6 12A11.500 11.500 0 0 1 12 1.200M3.700 12.400A8.500 8.500 0 0 1 12.200 4.300M6.800 12.500A5.500 5.500 0 0 1 12.300 7.200" strokeWidth="1.100" /><circle cx="11.300" cy="11.300" r="1.500" fill="currentColor" stroke="none" /></Svg>
        <Svg className="ml-2 h-[13px] w-4" box="0 0 16 13"><path d="M4.500 4.500h10v6H3V8" /><path d="M5.500 6h8v3.500h-8z" fill="currentColor" stroke="none" /><path d="M15.500 6v3M.8 3.500h4v1.500q0 2-2 2t-2-2zM1.800 1v2.500M3.800 1v2.500M2.800 7v2" /></Svg>
        <Svg className="ml-[10px] h-[15px] w-3" box="0 0 12 15"><path d="M.8 4.500h7v6h-7zM7.800 6.500l3-1.500v5l-3-1.500M2 2.500Q5 0 9 2.500M2 12.500q3 2.500 7 0" strokeWidth="1.200" /></Svg>
        <Svg className="ml-[10px] h-[13px] w-4" box="0 0 16 13"><path d="M.6 4.500h2.500L6.500 1.500v10L3.100 8.500H.6z" strokeWidth="1.100" /><path d="M8.500 4.500q1 2 0 4" /><path d="M10.800 3q2 3.500 0 7M13 1.500q3 5 0 10" stroke="#888" /></Svg>
        <Svg className="ml-[8px] h-[13px] w-[23px]" box="0 0 23 13"><path d="M.6.6h21.800v11.800H.6z" strokeWidth="1.100" /><path d="M3 4h17M3 6.500h17" strokeDasharray="1.200 1.200" /><path d="M3 9.500h2M6 9.500h11M18 9.500h2" /></Svg>
        <T className="ml-[11px] w-[24px] text-[12px]">ENG</T>
        <div className="ml-3 flex w-[59px] flex-col items-center pb-px text-[11.500px] leading-[18px]">
          <T className="w-[50px]">10:38 AM</T>
          <T className="w-[59px]">26-10-2023</T>
        </div>
        <svg viewBox="0 0 17 16" className="ml-[17px] h-4 w-[17px]"><path d="M0 0h16v12H9l-4 4v-4H0z" fill="#111" /><path d="M2.500 3h11M2.500 6h11M2.500 9h6" stroke="#dcdcdc" strokeWidth="1.100" /><circle cx="13" cy="11.500" r="3.500" fill="#dcdcdc" /><path d="M10.500 13.500L15.500 9q1 6-4 5z" stroke="#111" fill="none" /></svg>
        <span className="ml-[18px] h-10 w-px bg-[#b9babc]" />
      </div>
    </div>
  );
}

export default function App() {
  return (
    <div className="flex h-[768px] w-[1366px] flex-col overflow-hidden bg-white font-['Noto_Sans','Open_Sans',sans-serif]">
      <TabStrip />
      <Toolbar />
      <Bookmarks />
      <Header />
      <div className="flex h-[576px]">
        <Sidebar />
        <PipelineList />
        <Releases />
      </div>
      <Taskbar />
    </div>
  );
}
